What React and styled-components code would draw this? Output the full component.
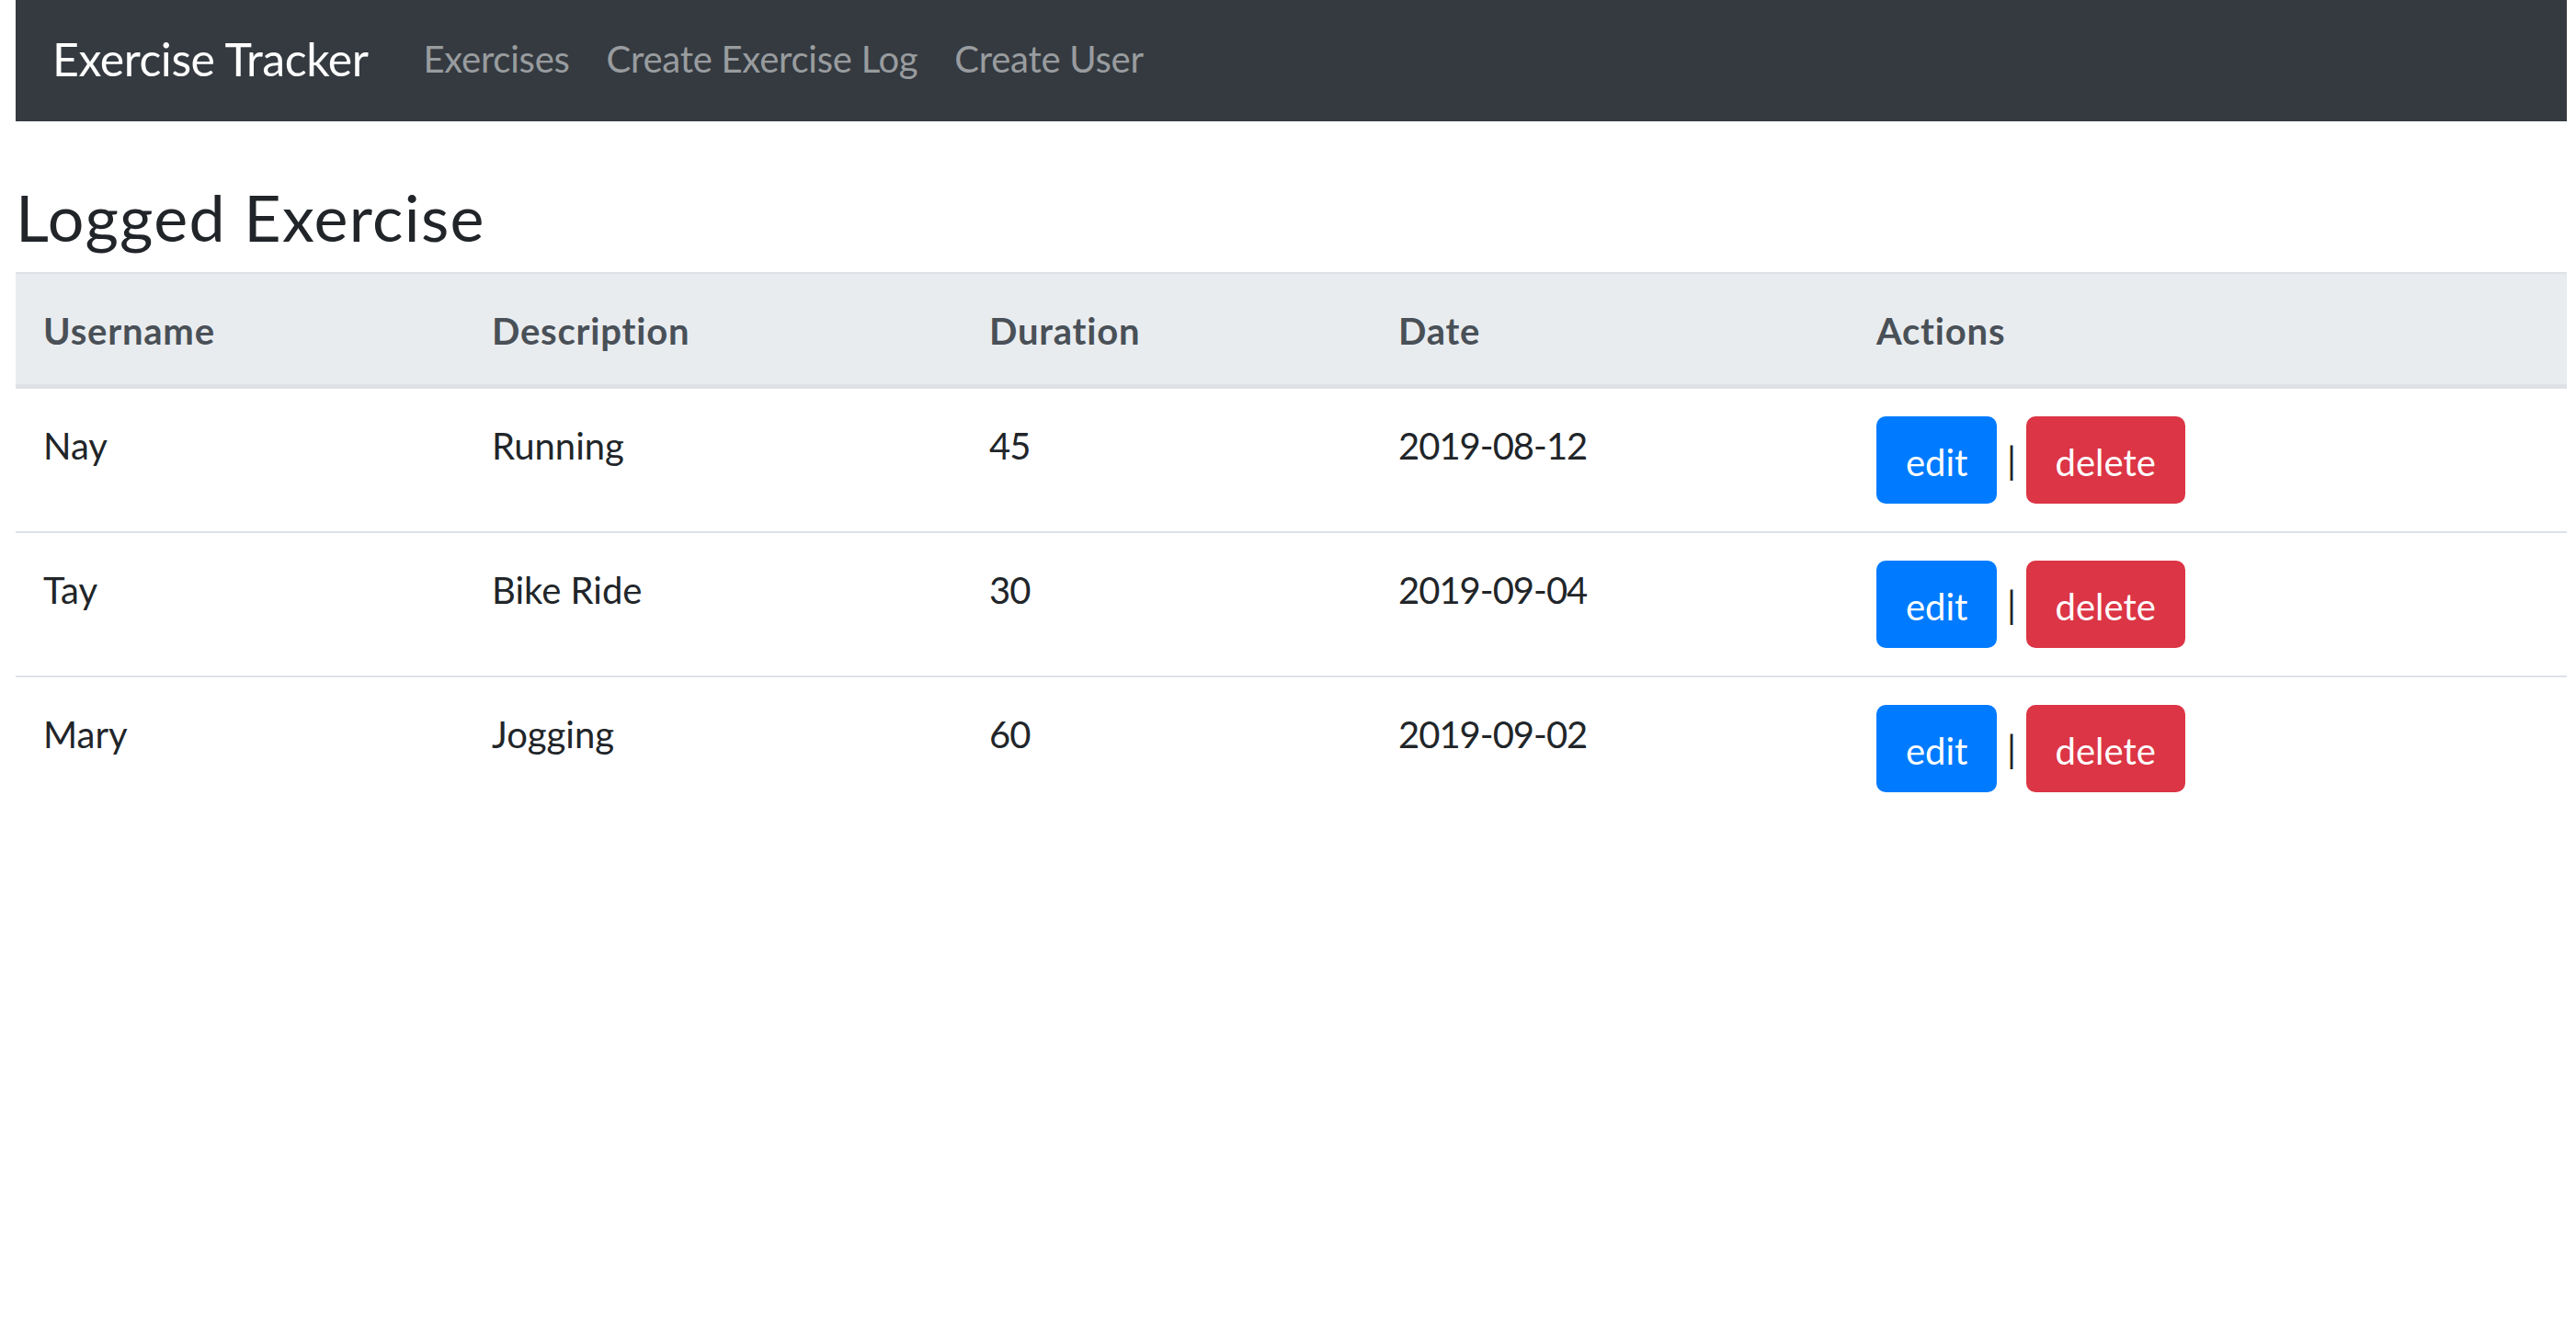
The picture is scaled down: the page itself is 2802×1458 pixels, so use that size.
import styled, { createGlobalStyle } from "styled-components";

const GlobalStyle = createGlobalStyle`
  *, *::before, *::after {
    box-sizing: border-box;
  }
  body {
    margin: 0;
    background: #fff;
    color: #212529;
    font-family: Lato, "Segoe UI", "Noto Sans", sans-serif;
    font-size: 40px;
    line-height: 1.5;
  }
`;

const exercises = [
  { id: 1, username: "Nay", description: "Running", duration: 45, date: "2019-08-12" },
  { id: 2, username: "Tay", description: "Bike Ride", duration: 30, date: "2019-09-04" },
  { id: 3, username: "Mary", description: "Jogging", duration: 60, date: "2019-09-02" },
];

const columns = [
  { label: "Username", width: "488px" },
  { label: "Description", width: "541px" },
  { label: "Duration", width: "445px" },
  { label: "Date", width: "520px" },
  { label: "Actions", width: "auto" },
];

const Page = styled.div`
  padding: 0 10px 0 17px;
`;

const Navbar = styled.nav`
  height: 132px;
  padding: 0 40px 4px;
  background-color: #343a40;
  display: flex;
  align-items: center;
`;

const Brand = styled.a`
  margin-right: 40px;
  color: #fff;
  font-size: 50px;
  line-height: 1.5;
  letter-spacing: -0.45px;
  text-decoration: none;
  white-space: nowrap;
`;

const NavList = styled.ul`
  display: flex;
  margin: 0;
  padding: 0;
  list-style: none;
`;

const NavLink = styled.a`
  display: block;
  padding: 0 20px;
  color: rgba(255, 255, 255, 0.5);
  font-size: 40px;
  line-height: 1.5;
  letter-spacing: -0.25px;
  text-decoration: none;
  white-space: nowrap;
`;

const Heading = styled.h3`
  margin: 0 0 18px;
  padding-top: 62px;
  font-size: 70px;
  font-weight: 400;
  line-height: 1.2;
  letter-spacing: 1.3px;
`;

const Table = styled.table`
  width: 100%;
  border-collapse: collapse;
  table-layout: fixed;
`;

const HeadCell = styled.th`
  width: ${(props) => props.width};
  padding: 32px 30px 28px;
  background-color: #e9ecef;
  color: #495057;
  border-top: 2px solid #dee2e6;
  border-bottom: 5px solid #dee2e6;
  text-align: left;
  vertical-align: bottom;
  font-weight: 700;
  letter-spacing: 0.8px;
`;

const Cell = styled.td`
  padding: ${(props) => (props.$actions ? "30px" : "32px 30px 28px")};
  border-top: 2px solid #dee2e6;
  vertical-align: top;
  letter-spacing: ${(props) => (props.$numeric ? "-1px" : "normal")};
`;

const Actions = styled.div`
  display: flex;
  align-items: center;
`;

const Button = styled.button`
  padding: 17.5px 30px 13.5px;
  border: 2px solid ${(props) => props.color};
  border-radius: 10px;
  background-color: ${(props) => props.color};
  color: #fff;
  font-family: inherit;
  font-size: 40px;
  line-height: 60px;
  cursor: pointer;
`;

const Separator = styled.span`
  padding: 0 10.5px;
  line-height: 1;
  color: #212529;
`;

export default function App() {
  return (
    <Page>
      <GlobalStyle />
      <Navbar>
        <Brand href="#">Exercise Tracker</Brand>
        <NavList>
          <li><NavLink href="#">Exercises</NavLink></li>
          <li><NavLink href="#">Create Exercise Log</NavLink></li>
          <li><NavLink href="#">Create User</NavLink></li>
        </NavList>
      </Navbar>
      <Heading>Logged Exercise</Heading>
      <Table>
        <thead>
          <tr>
            {columns.map((col) => (
              <HeadCell key={col.label} width={col.width}>{col.label}</HeadCell>
            ))}
          </tr>
        </thead>
        <tbody>
          {exercises.map((ex) => (
            <tr key={ex.id}>
              <Cell>{ex.username}</Cell>
              <Cell>{ex.description}</Cell>
              <Cell $numeric>{ex.duration}</Cell>
              <Cell $numeric>{ex.date}</Cell>
              <Cell $actions>
                <Actions>
                  <Button color="#007bff">edit</Button>
                  <Separator>|</Separator>
                  <Button color="#dc3545">delete</Button>
                </Actions>
              </Cell>
            </tr>
          ))}
        </tbody>
      </Table>
    </Page>
  );
}
